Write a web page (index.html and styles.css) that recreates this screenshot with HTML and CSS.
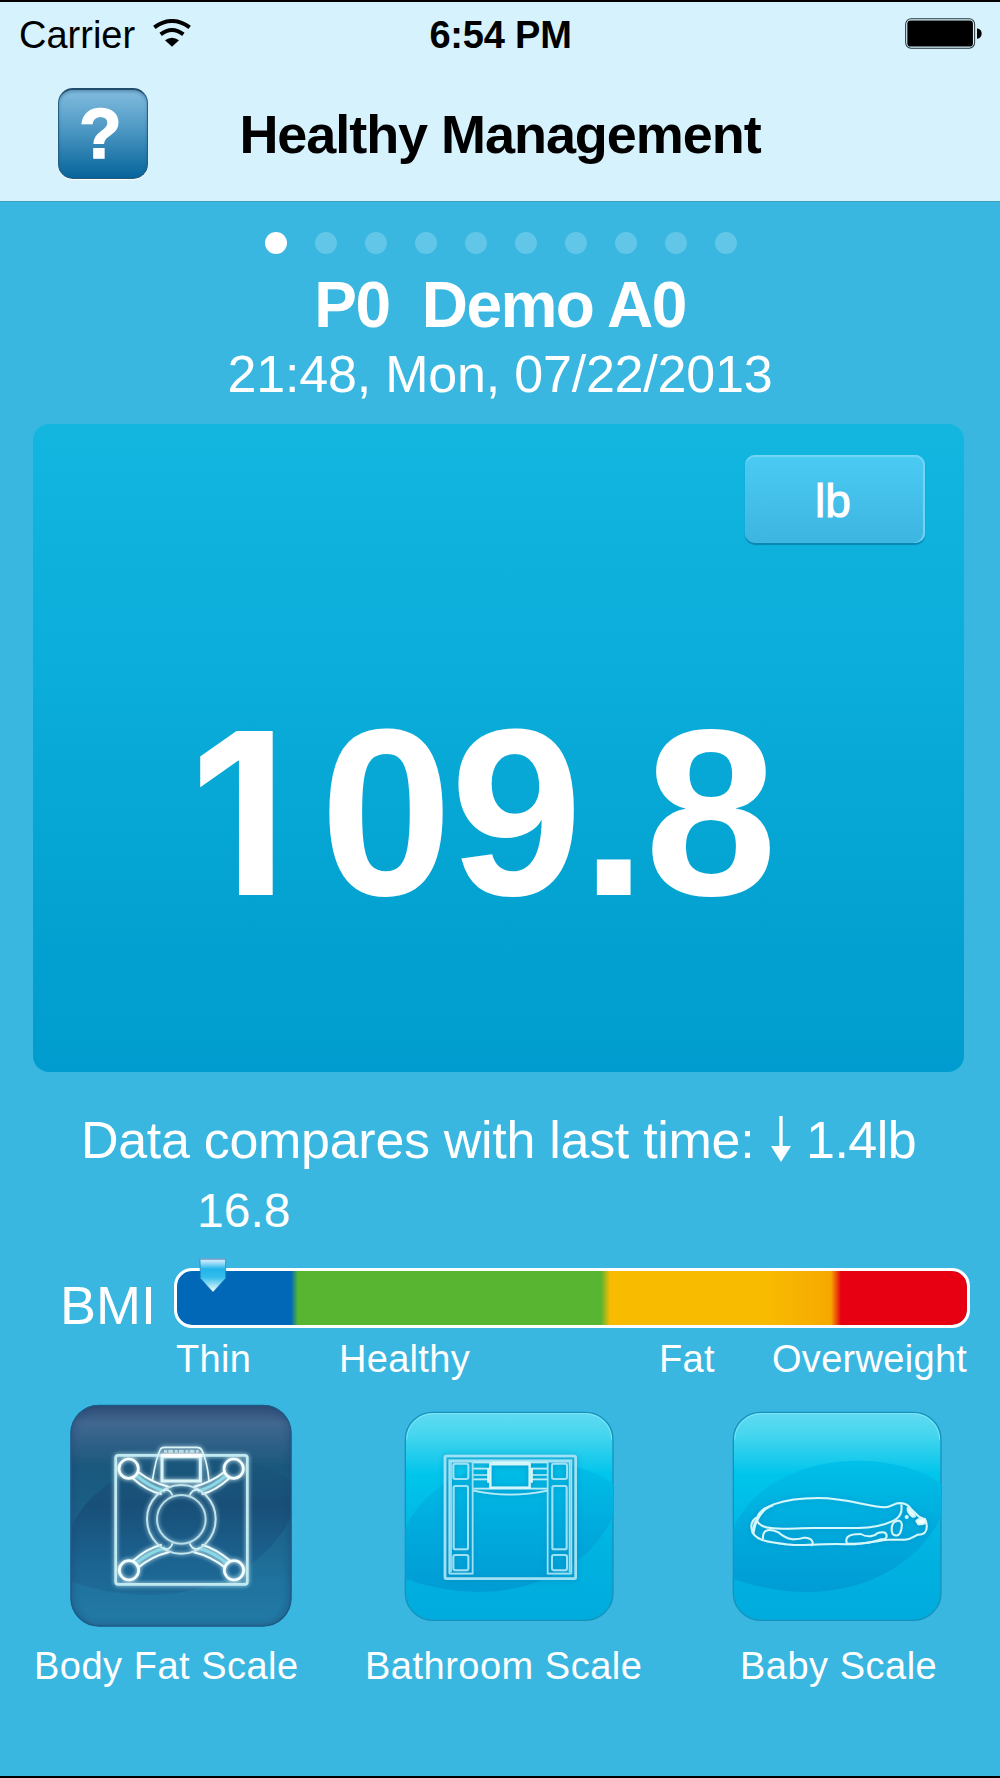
FILE: index.html
```html
<!DOCTYPE html>
<html lang="en">
<head>
<meta charset="utf-8">
<title>Healthy Management</title>
<link rel="stylesheet" href="styles.css">
</head>
<body>
<div class="screen">
  <header class="header">
    <div class="status">
      <div class="carrier"><span>Carrier</span>
        <svg class="wifi" viewBox="0 0 114 84"><path d="M4 25Q57 -13 110 25" fill="none" stroke="#000" stroke-width="12"/><path d="M23 46Q57 20 91 46" fill="none" stroke="#000" stroke-width="12"/><path d="M36 64Q57 48 78 64L57 83Z"/></svg>
      </div>
      <div class="time">6:54 PM</div>
      <svg class="battery" viewBox="0 0 230 92"><rect x="2" y="2" width="206" height="88" rx="16" fill="none" stroke="#25343b" stroke-width="3"/><rect x="7" y="7" width="196" height="78" rx="10"/><path d="M215 30Q229 33 229 46T215 62Z"/></svg>
    </div>
    <div class="navbar">
      <button class="help">?</button>
      <h1 class="title">Healthy Management</h1>
    </div>
  </header>
  <main class="main">
    <div class="dots"><i class="dot on"></i><i class="dot"></i><i class="dot"></i><i class="dot"></i><i class="dot"></i><i class="dot"></i><i class="dot"></i><i class="dot"></i><i class="dot"></i><i class="dot"></i></div>
    <h2 class="person">P0&nbsp; Demo A0</h2>
    <div class="date">21:48, Mon, 07/22/2013</div>
    <section class="panel">
      <button class="unit">lb</button>
      <div class="weight"><span class="one">1</span>09.8</div>
    </section>
    <div class="compare">
      <span class="compare-text">Data compares with last time:</span>
      <svg class="arrow" viewBox="0 0 60 138"><path d="M25 0H35V90H60L30 138L0 90H25Z" fill="#fff"/></svg>
      <span class="delta">1.4lb</span>
    </div>
    <div class="bmi-value">16.8</div>
    <div class="bmi">
      <span class="bmi-name">BMI</span>
      <div class="bar">
        <svg class="pointer" viewBox="0 0 84 104">
          <defs><linearGradient id="pin" x2="0" y2="1"><stop offset="0" stop-color="#cfeafa"/><stop offset=".08" stop-color="#b5e4fa"/><stop offset=".3" stop-color="#22b4ea"/><stop offset=".55" stop-color="#35bdec"/><stop offset="1" stop-color="#fff"/></linearGradient></defs>
          <path d="M3 3H80V60L42 102L4 60Z" fill="url(#pin)" stroke="#1680b8" stroke-width="2"/>
          <path d="M4 3H79" stroke="#8fa8cc" stroke-width="4"/>
        </svg>
      </div>
    </div>
    <div class="legend"><span>Thin</span><span>Healthy</span><span>Fat</span><span>Overweight</span></div>
    <nav class="scales">
      <div class="scale body-fat">
        <svg class="icon" viewBox="0 0 720 720">
          <defs>
            <linearGradient id="dark" x2="0" y2="1"><stop offset="0" stop-color="#2f4d77"/><stop offset=".08" stop-color="#41678f"/><stop offset=".28" stop-color="#1a587d"/><stop offset=".5" stop-color="#1b6088"/><stop offset=".8" stop-color="#1f739e"/><stop offset="1" stop-color="#227ba6"/></linearGradient>
            <linearGradient id="darkOval" x2="0" y2="1"><stop offset="0" stop-color="#1a587d"/><stop offset=".35" stop-color="#184f78"/><stop offset=".8" stop-color="#1c6593"/><stop offset="1" stop-color="#1e6b98"/></linearGradient>
            <clipPath id="darkClip"><rect x="32" y="30" width="662" height="663" rx="84"/></clipPath>
            <filter id="glow" x="-15%" y="-15%" width="130%" height="130%"><feGaussianBlur stdDeviation="7" result="b"/><feMerge><feMergeNode in="b"/><feMergeNode in="SourceGraphic"/></feMerge></filter>
            <filter id="soft"><feGaussianBlur stdDeviation="10"/></filter>
          </defs>
          <rect x="32" y="30" width="662" height="664" rx="84" fill="url(#dark)"/>
          <g clip-path="url(#darkClip)">
            <path d="M32 400C84 278 233 185 435 185Q594 188 694 257V363C626 511 456 600 265 600Q137 598 32 558Z" fill="url(#darkOval)"/>
            <rect x="32" y="30" width="662" height="663" rx="84" fill="none" stroke="#23406d" stroke-opacity=".55" stroke-width="14" filter="url(#soft)"/>
          </g>
          <rect x="33" y="31" width="660" height="662" rx="84" fill="none" stroke="#1d5b86" stroke-width="4"/>
          <g filter="url(#glow)" stroke="#70d6e8" fill="none">
            <rect x="167" y="181" width="395" height="387" rx="8" stroke="#c2eaf2" stroke-width="8"/>
            <g stroke="#d9f5f8" stroke-width="5">
              <path d="M277 258C283 220 290 185 300 165Q303 157 314 157H410Q422 157 426 166Q442 200 447 258"/>
              <rect x="306" y="185" width="115" height="73" stroke-width="9"/>
              <path d="M303 181H427" stroke="#fff" stroke-width="10"/>
              <path d="M312 169H416" stroke-width="8" stroke-dasharray="9 4 14 5" opacity=".7"/>
            </g>
            <g stroke="#8ad8e6" stroke-width="9"><path d="M226 239Q268 276 316 289M502 239Q460 276 413 289M224 508Q270 470 316 459M505 508Q460 470 413 459"/></g>
            <g stroke="#eafcfd" stroke-width="6"><path d="M234 230Q275 262 328 276M218 250Q260 288 305 298M494 230Q453 262 400 276M508 250Q466 288 425 298M234 518Q275 484 328 471M218 498Q260 460 305 449M496 518Q453 484 400 471M512 498Q466 460 425 449"/></g>
            <circle cx="364" cy="373" r="103" stroke="#c4e5ed" stroke-width="6"/>
            <circle cx="364" cy="373" r="73" stroke="#b7dde7" stroke-width="6"/>
            <path d="M309 286Q330 280 337 301M419 286Q398 280 389 301M309 460Q330 468 338 445M419 460Q398 468 389 445" stroke="#d5f3f7" stroke-width="5"/>
            <g stroke="#f4ffff" stroke-width="8"><circle cx="206" cy="221" r="29"/><circle cx="521" cy="221" r="29"/><circle cx="207" cy="526" r="29"/><circle cx="522" cy="526" r="29"/></g>
          </g>
        </svg>
        <span class="label">Body Fat Scale</span>
      </div>
      <div class="scale bathroom">
        <svg class="icon" viewBox="0 0 690 690">
          <defs>
            <linearGradient id="light" x2="0" y2="1"><stop offset="0" stop-color="#60dbf2"/><stop offset=".1" stop-color="#48d6ef"/><stop offset=".3" stop-color="#00c5eb"/><stop offset=".65" stop-color="#00b3e1"/><stop offset="1" stop-color="#00abdd"/></linearGradient>
            <linearGradient id="lightOval" x2="0" y2="1"><stop offset="0" stop-color="#00c0e9"/><stop offset=".5" stop-color="#00abdd"/><stop offset="1" stop-color="#009cd5"/></linearGradient>
            <clipPath id="lightClip"><rect x="31" y="36" width="623" height="623" rx="82"/></clipPath>
            <filter id="shade" x="-15%" y="-30%" width="130%" height="160%"><feDropShadow dx="0" dy="2" stdDeviation="9" flood-color="#0088bd" flood-opacity=".7"/></filter>
          </defs>
          <rect x="31" y="37" width="623" height="624" rx="82" fill="url(#light)" stroke="#1593bd" stroke-width="4"/>
          <g clip-path="url(#lightClip)"><path d="M31 385C80 270 220 182 410 182Q560 185 654 250V350C590 490 430 576 250 576Q130 574 31 536Z" fill="url(#lightOval)"/></g>
          <path d="M35 119A79 79 0 0 1 113 41H572A79 79 0 0 1 650 119" fill="none" stroke="#8be7f7" stroke-width="3" opacity=".8"/>
          <g filter="url(#shade)" fill="none" stroke="#9fe1f4" stroke-width="5">
            <rect x="150" y="168" width="392" height="368" rx="4" stroke-width="8"/>
            <path d="M168 517V185H524V517"/>
            <path d="M163 521V181H529V521"/>
            <path d="M163 521H233V185M458 185V521H529"/>
            <g stroke-width="6"><rect x="175" y="191" width="45" height="46" rx="6"/><rect x="176" y="258" width="43" height="190" rx="5"/><rect x="175" y="465" width="45" height="46" rx="6"/><rect x="471" y="191" width="45" height="46" rx="6"/><rect x="472" y="258" width="43" height="190" rx="5"/><rect x="471" y="465" width="45" height="46" rx="6"/></g>
            <path d="M235 187H458M235 206H282M235 225H282M235 238H282M410 206H458M410 225H458M410 238H458M235 266H458M235 272Q345 296 458 272" stroke="#b5ecf8"/>
            <rect x="286" y="192" width="118" height="71" stroke="#d5f7fb" stroke-width="7"/>
            <path d="M290 190H403" stroke="#d5f7fb" stroke-width="11"/>
            <path d="M280 204V248M410 204V248" stroke="#d5f7fb" stroke-width="7"/>
          </g>
        </svg>
        <span class="label">Bathroom Scale</span>
      </div>
      <div class="scale baby">
        <svg class="icon" viewBox="0 0 690 690">
          <g transform="translate(-6 0)"><rect x="31" y="37" width="623" height="624" rx="82" fill="url(#light)" stroke="#1593bd" stroke-width="4"/>
          <g clip-path="url(#lightClip)"><path d="M31 385C80 270 220 182 410 182Q560 185 654 250V350C590 490 430 576 250 576Q130 574 31 536Z" fill="url(#lightOval)"/></g>
          <path d="M35 119A79 79 0 0 1 113 41H572A79 79 0 0 1 650 119" fill="none" stroke="#8be7f7" stroke-width="3" opacity=".8"/></g>
          <g filter="url(#shade)" fill="none" stroke="#d4f8fc" stroke-width="6" stroke-linejoin="round">
            <path d="M96 362C94 320 175 294 280 294C370 294 425 321 480 322C500 322 505 309 525 309Q548 310 558 327L582 350Q605 358 605 375Q608 405 578 404C563 412 555 421 535 419H490C455 421 430 433 370 433C285 430 245 437 205 435C160 430 100 428 83 398Q70 365 99 350Q125 320 145 316"/>
            <path d="M96 362Q103 382 145 385C180 389 225 383 270 384H400Q460 383 501 364Q535 350 529 313"/>
            <path d="M114 417C111 382 140 388 160 397C190 424 215 420 238 413C262 412 270 432 257 437"/>
            <path d="M366 431C355 405 385 402 407 402C428 414 449 409 458 399Q485 391 485 409Q483 419 467 418Q420 434 366 431"/>
            <path d="M511 365Q527 356 531 374Q530 391 525 400Q518 411 505 404C498 397 497 372 511 365Z"/>
            <path d="M84 400Q89 368 96 360Q102 345 121 325" stroke-width="9"/>
            <path d="M548 324Q562 328 570 349L563 350Q547 338 548 324ZM574 363Q583 352 600 357Q608 374 580 373Z" fill="#f4ffff"/>
            <circle cx="545" cy="351" r="3" fill="#fff"/>
          </g>
        </svg>
        <span class="label">Baby Scale</span>
      </div>
    </nav>
  </main>
</div>
</body>
</html>
```

FILE: styles.css
```css
* { box-sizing: border-box; }
body { margin: 0; font-family: "Liberation Sans", Arial, Helvetica, sans-serif; }
button { font-family: inherit; padding: 0; }
h1, h2 { margin: 0; }

.screen {
  width: 1000px;
  height: 1778px;
  display: flex;
  flex-direction: column;
  background: #39b7e1;
  border-top: 2px solid #000;
  border-bottom: 2px solid #000;
  overflow: hidden;
  white-space: nowrap;
}

.header {
  height: 200px;
  flex: none;
  background: #d6f2fd;
  border-bottom: 1px solid #3da2bf;
  color: #000;
}
.status {
  height: 65px;
  display: grid;
  grid-template-columns: 1fr auto 1fr;
  align-items: center;
  padding: 1px 18px 0 19px;
  font-size: 38px;
}
.carrier { display: flex; align-items: center; gap: 18px; }
.wifi { width: 38px; height: 28px; margin-top: -4px; }
.time { letter-spacing: -0.2px; font-weight: bold; }
.battery { width: 77px; height: 31px; justify-self: end; margin-top: -3px; }
.navbar {
  height: 134px;
  display: grid;
  grid-template-columns: 1fr auto 1fr;
  align-items: center;
}
.help {
  width: 90px;
  height: 91px;
  margin: -2px 0 0 58px;
  border: 1px solid #245d80;
  border-top: 2px solid #204e6b;
  border-radius: 15px;
  background: linear-gradient(#82bcdf, #4d98c3 45%, #05649b);
  box-shadow: inset 0 2px 3px rgba(20, 70, 110, .35), 0 1px 1px #fff;
  color: #fff;
  font-size: 70px;
  font-weight: bold;
  line-height: 89px;
  padding-right: 5px;
  -webkit-text-stroke: 1.5px #fff;
}
.title { font-size: 54px; letter-spacing: -1.05px; padding-bottom: 1px; }

.main { flex: 1; display: flex; flex-direction: column; color: #fff; }
.dots { height: 73px; flex: none; display: flex; justify-content: center; gap: 28px; padding: 30px 0 0 1px; }
.dot { width: 22px; height: 22px; border-radius: 50%; background: #61c6e8; }
.dot.on { background: #fff; }
.person { flex: none; font-size: 64px; line-height: 61px; letter-spacing: -1.6px; text-align: center; }
.date { flex: none; font-size: 52px; line-height: 76px; letter-spacing: -0.2px; text-align: center; }

.panel {
  flex: none;
  width: 931px;
  height: 648px;
  margin: 12px 0 0 33px;
  padding: 31px 39px 0 0;
  display: flex;
  flex-direction: column;
  border-radius: 16px;
  background: linear-gradient(#12b6df, #0badda 38%, #03a2d1 76%, #009ccf);
}
.unit {
  align-self: flex-end;
  width: 180px;
  height: 88px;
  border: 0;
  border-radius: 10px;
  background: linear-gradient(#4acbf4, #3db5e1);
  box-shadow: inset 0 2px 1px #72d6f5, inset -2px 0 1px #72d6f5, 0 2px 1px #0986b2;
  color: #fff;
  font-size: 46px;
  line-height: 92px;
  padding-right: 4px;
  -webkit-text-stroke: 1px #fff;
}
.weight {
  display: flex;
  margin: 151px 0 0 157px;
  font-size: 238px;
  line-height: 238px;
  font-weight: bold;
  letter-spacing: -2px;
}
.one { width: 130px; font-family: Inter, sans-serif; font-size: 226px; font-weight: 700; }

.compare { flex: none; height: 60px; margin-top: 38px; padding-left: 81px; display: flex; align-items: center; font-size: 52px; }
.compare-text { width: 690px; letter-spacing: -0.3px; }
.arrow { width: 20px; height: 46px; margin: -2px 15px 0 0; }
.delta { letter-spacing: -0.5px; }
.bmi-value { flex: none; margin-top: 10px; padding-left: 197px; font-size: 48px; line-height: 61px; }
.bmi { flex: none; display: flex; height: 60px; margin-top: 27px; }
.bmi-name { width: 174px; padding-left: 60px; font-size: 54px; line-height: 74px; }
.bar {
  position: relative;
  width: 796px;
  height: 60px;
  border: 3px solid #fff;
  border-radius: 18px;
  background: linear-gradient(90deg, #0068b7 114px, #58b531 121px, #58b531 424px, #f8bb00 433px, #f8bb00 590px, #f6a800 654px, #e60012 664px) padding-box;
}
.pointer { position: absolute; left: 22px; top: -13px; width: 28px; height: 35px; }
.legend { flex: none; display: grid; grid-template-columns: 163px 320px 113px auto; margin-top: 9px; padding-left: 176px; font-size: 38px; line-height: 45px; letter-spacing: 0.3px; }

.scales { display: grid; grid-template-columns: 333px 349px auto; margin-top: 13px; }
.scale { display: flex; flex-direction: column; height: 293px; justify-content: space-between; }
.icon { width: 230px; height: 230px; display: block; margin-top: 5px; }
.body-fat .icon { width: 240px; height: 240px; margin: 0 0 0 60px; }
.bathroom .icon { margin-left: 62px; }
.baby .icon { margin-left: 43px; }
.label { font-size: 38px; line-height: 44px; letter-spacing: 0.5px; }
.body-fat .label { margin-left: 34px; }
.bathroom .label { margin-left: 32px; }
.baby .label { margin-left: 58px; }
```
